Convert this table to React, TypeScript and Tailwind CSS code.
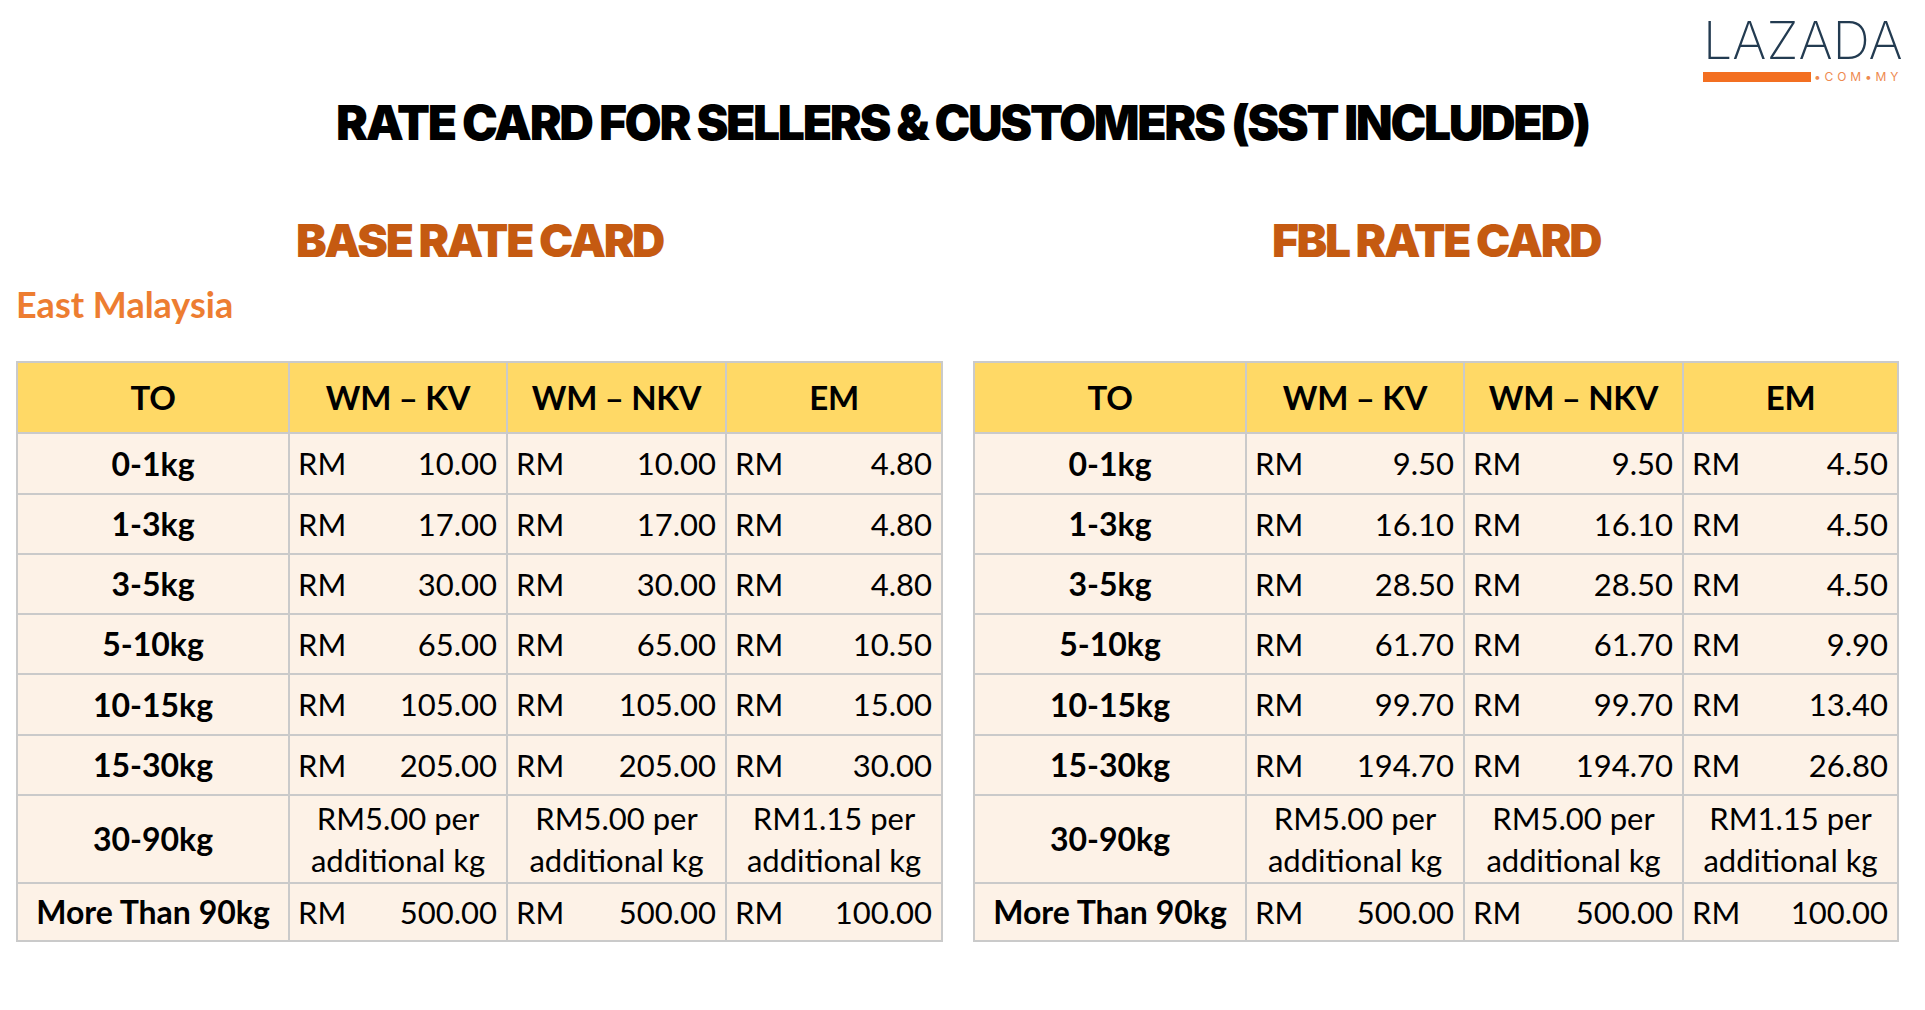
import React from "react";

type Row = { label: string; vals: [string, string, string] | null };

const base: Row[] = [
  { label: "0-1kg", vals: ["10.00", "10.00", "4.80"] },
  { label: "1-3kg", vals: ["17.00", "17.00", "4.80"] },
  { label: "3-5kg", vals: ["30.00", "30.00", "4.80"] },
  { label: "5-10kg", vals: ["65.00", "65.00", "10.50"] },
  { label: "10-15kg", vals: ["105.00", "105.00", "15.00"] },
  { label: "15-30kg", vals: ["205.00", "205.00", "30.00"] },
  { label: "30-90kg", vals: null },
  { label: "More Than 90kg", vals: ["500.00", "500.00", "100.00"] },
];

const fbl: Row[] = [
  { label: "0-1kg", vals: ["9.50", "9.50", "4.50"] },
  { label: "1-3kg", vals: ["16.10", "16.10", "4.50"] },
  { label: "3-5kg", vals: ["28.50", "28.50", "4.50"] },
  { label: "5-10kg", vals: ["61.70", "61.70", "9.90"] },
  { label: "10-15kg", vals: ["99.70", "99.70", "13.40"] },
  { label: "15-30kg", vals: ["194.70", "194.70", "26.80"] },
  { label: "30-90kg", vals: null },
  { label: "More Than 90kg", vals: ["500.00", "500.00", "100.00"] },
];

const perKg = ["RM5.00 per", "RM5.00 per", "RM1.15 per"];

function RateTable({ rows, right }: { rows: Row[]; right?: boolean }) {
  return (
    <div
      className={
        "grid gap-[2px] p-[2px] bg-[#cacaca] " +
        (right
          ? "grid-cols-[270px_216px_217px_213px]"
          : "grid-cols-[270px_216px_217px_214px]") +
        " grid-rows-[69px_59px_58px_58px_58px_59px_58px_86px_56px]"
      }
    >
      {["TO", "WM – KV", "WM – NKV", "EM"].map((h) => (
        <div
          key={h}
          className="bg-[#FFD966] flex items-center justify-center font-bold text-[33px] tracking-[-0.01em] text-black"
        >
          {h}
        </div>
      ))}
      {rows.map((r) => (
        <React.Fragment key={r.label}>
          <div className="bg-[#FDF2E7] flex items-center justify-center font-bold text-[32px] text-black whitespace-nowrap">
            {r.label}
          </div>
          {r.vals
            ? r.vals.map((v, i) => (
                <div
                  key={i}
                  className="bg-[#FDF2E7] flex items-center justify-between pl-[8px] pr-[9px] text-[31px] text-black"
                >
                  <span>RM</span>
                  <span>{v}</span>
                </div>
              ))
            : perKg.map((p, i) => (
                <div
                  key={i}
                  className="bg-[#FDF2E7] flex flex-col items-center justify-center text-[31px] leading-[42px] text-black whitespace-nowrap"
                >
                  <span>{p}</span>
                  <span>additional kg</span>
                </div>
              ))}
        </React.Fragment>
      ))}
    </div>
  );
}

export default function App() {
  return (
    <div className="w-[1925px] h-[1010px] bg-white overflow-hidden font-['Lato',sans-serif]">
      {/* Logo */}
      <div className="flex justify-end pr-[23px] pt-[14px]">
        <div className="w-[199px] flex flex-col">
          <div className="font-['Inter',sans-serif] font-extralight text-[52px] leading-[54px] text-[#233b51] text-center">
            LAZADA
          </div>
          <div className="mt-[4px] flex items-center h-[10px]">
            <div className="w-[108px] h-[10px] bg-[#F36F21] shrink-0" />
            <div className="ml-[3px] font-['Inter',sans-serif] text-[12px] leading-[10px] tracking-[0.32em] text-[#EE8A4F] whitespace-nowrap">
              •COM•MY
            </div>
          </div>
        </div>
      </div>

      {/* Title */}
      <div className="mt-[16px] text-center font-['Inter',sans-serif] font-black text-[48px] leading-[49px] tracking-[-0.049em] text-black">
        RATE CARD FOR SELLERS &amp; CUSTOMERS (SST INCLUDED)
      </div>

      {/* Section headings */}
      <div className="mt-[69px] pl-[16px] grid grid-cols-[927px_926px] gap-x-[30px]">
        <div className="text-center font-['Inter',sans-serif] font-black text-[46px] leading-[48px] tracking-[-0.05em] text-[#C55A11]">
          BASE RATE CARD
        </div>
        <div className="text-center font-['Inter',sans-serif] font-black text-[46px] leading-[48px] tracking-[-0.05em] text-[#C55A11]">
          FBL RATE CARD
        </div>
      </div>

      <div className="mt-[22px] pl-[16px] font-bold text-[36px] leading-[36px] text-[#ED7D31]">
        East Malaysia
      </div>

      {/* Tables */}
      <div className="mt-[39px] pl-[16px] grid grid-cols-[927px_926px] gap-x-[30px] items-start">
        <RateTable rows={base} />
        <RateTable rows={fbl} right />
      </div>
    </div>
  );
}
